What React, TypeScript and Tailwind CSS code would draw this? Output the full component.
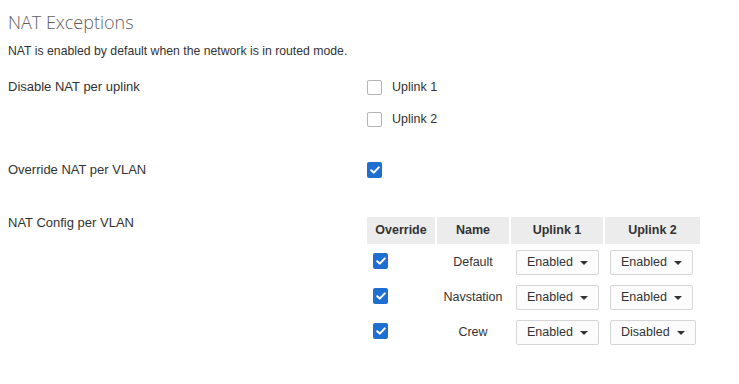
import React, { useState } from "react";

type Row = { name: string; override: boolean; uplink1: string; uplink2: string };

const rows: Row[] = [
  { name: "Default", override: true, uplink1: "Enabled", uplink2: "Enabled" },
  { name: "Navstation", override: true, uplink1: "Enabled", uplink2: "Enabled" },
  { name: "Crew", override: true, uplink1: "Enabled", uplink2: "Disabled" },
];

const Checkbox = ({ checked }: { checked: boolean }) => {
  if (!checked) {
    return <span className="block w-[15px] h-[15px] rounded-[2px] border border-[#b4b4b4] bg-white" />;
  }
  return (
    <span className="flex items-center justify-center w-[15px] h-[16px] rounded-[2px] bg-[#1f6fd0]">
      <svg width="10" height="8" viewBox="0 0 10 8" fill="none">
        <path d="M1.2 4.2 L3.8 6.6 L8.8 1.4" stroke="white" strokeWidth="2" strokeLinecap="round" strokeLinejoin="round" />
      </svg>
    </span>
  );
};

const Select = ({ value }: { value: string }) => (
  <div className="inline-flex items-center h-[25px] pl-[10px] pr-[10px] gap-[7px] border border-[#d6d6d6] rounded-[2px] bg-[#fcfcfc] text-[#333]">
    <span>{value}</span>
    <svg width="8" height="4" viewBox="0 0 8 4">
      <path d="M0 0 L8 0 L4 4 Z" fill="#333" />
    </svg>
  </div>
);

const App = () => {
  const [data] = useState<Row[]>(rows);

  return (
    <div className="min-h-[384px] bg-white px-2 pt-[10px] font-['Liberation_Sans',Arial,sans-serif] text-[12.5px] text-[#333]">
      <h2 className="font-['Open_Sans',sans-serif] font-light text-[18px] leading-6 text-[#5f5f5f]">NAT Exceptions</h2>
      <p className="mt-[10px] leading-[14px] text-[12.25px]">NAT is enabled by default when the network is in routed mode.</p>

      <div className="flex items-start mt-[21px]">
        <div className="w-[359px] leading-4 text-[13px]">Disable NAT per uplink</div>
        <div className="flex flex-col gap-[16px]">
          <div className="flex items-center h-4 gap-[10px]">
            <Checkbox checked={false} />
            <span>Uplink 1</span>
          </div>
          <div className="flex items-center h-4 gap-[10px]">
            <Checkbox checked={false} />
            <span>Uplink 2</span>
          </div>
        </div>
      </div>

      <div className="flex items-center mt-[35px] h-4">
        <div className="w-[359px] leading-4 text-[13px]">Override NAT per VLAN</div>
        <Checkbox checked={true} />
      </div>

      <div className="flex items-start mt-[37px]">
        <div className="w-[359px] leading-4 text-[13px]">NAT Config per VLAN</div>
        <div className="mt-[2px]">
          <div className="grid grid-cols-[68px_72px_92px_95px] gap-x-[2px] font-bold">
            <div className="h-[27px] flex items-center justify-center bg-[#ececec]">Override</div>
            <div className="h-[27px] flex items-center justify-center bg-[#ececec]">Name</div>
            <div className="h-[27px] flex items-center justify-center bg-[#ececec]">Uplink 1</div>
            <div className="h-[27px] flex items-center justify-center bg-[#ececec]">Uplink 2</div>
          </div>
          <div className="mt-[1px]">
            {data.map((r) => (
              <div key={r.name} className="grid grid-cols-[68px_72px_92px_95px] gap-x-[2px] h-[35px] items-center">
                <div className="pl-[6px] -mt-[3px]">
                  <Checkbox checked={r.override} />
                </div>
                <div className="text-center">{r.name}</div>
                <div className="pl-[5px]">
                  <Select value={r.uplink1} />
                </div>
                <div className="pl-[5px]">
                  <Select value={r.uplink2} />
                </div>
              </div>
            ))}
          </div>
        </div>
      </div>
    </div>
  );
};

export default App;
